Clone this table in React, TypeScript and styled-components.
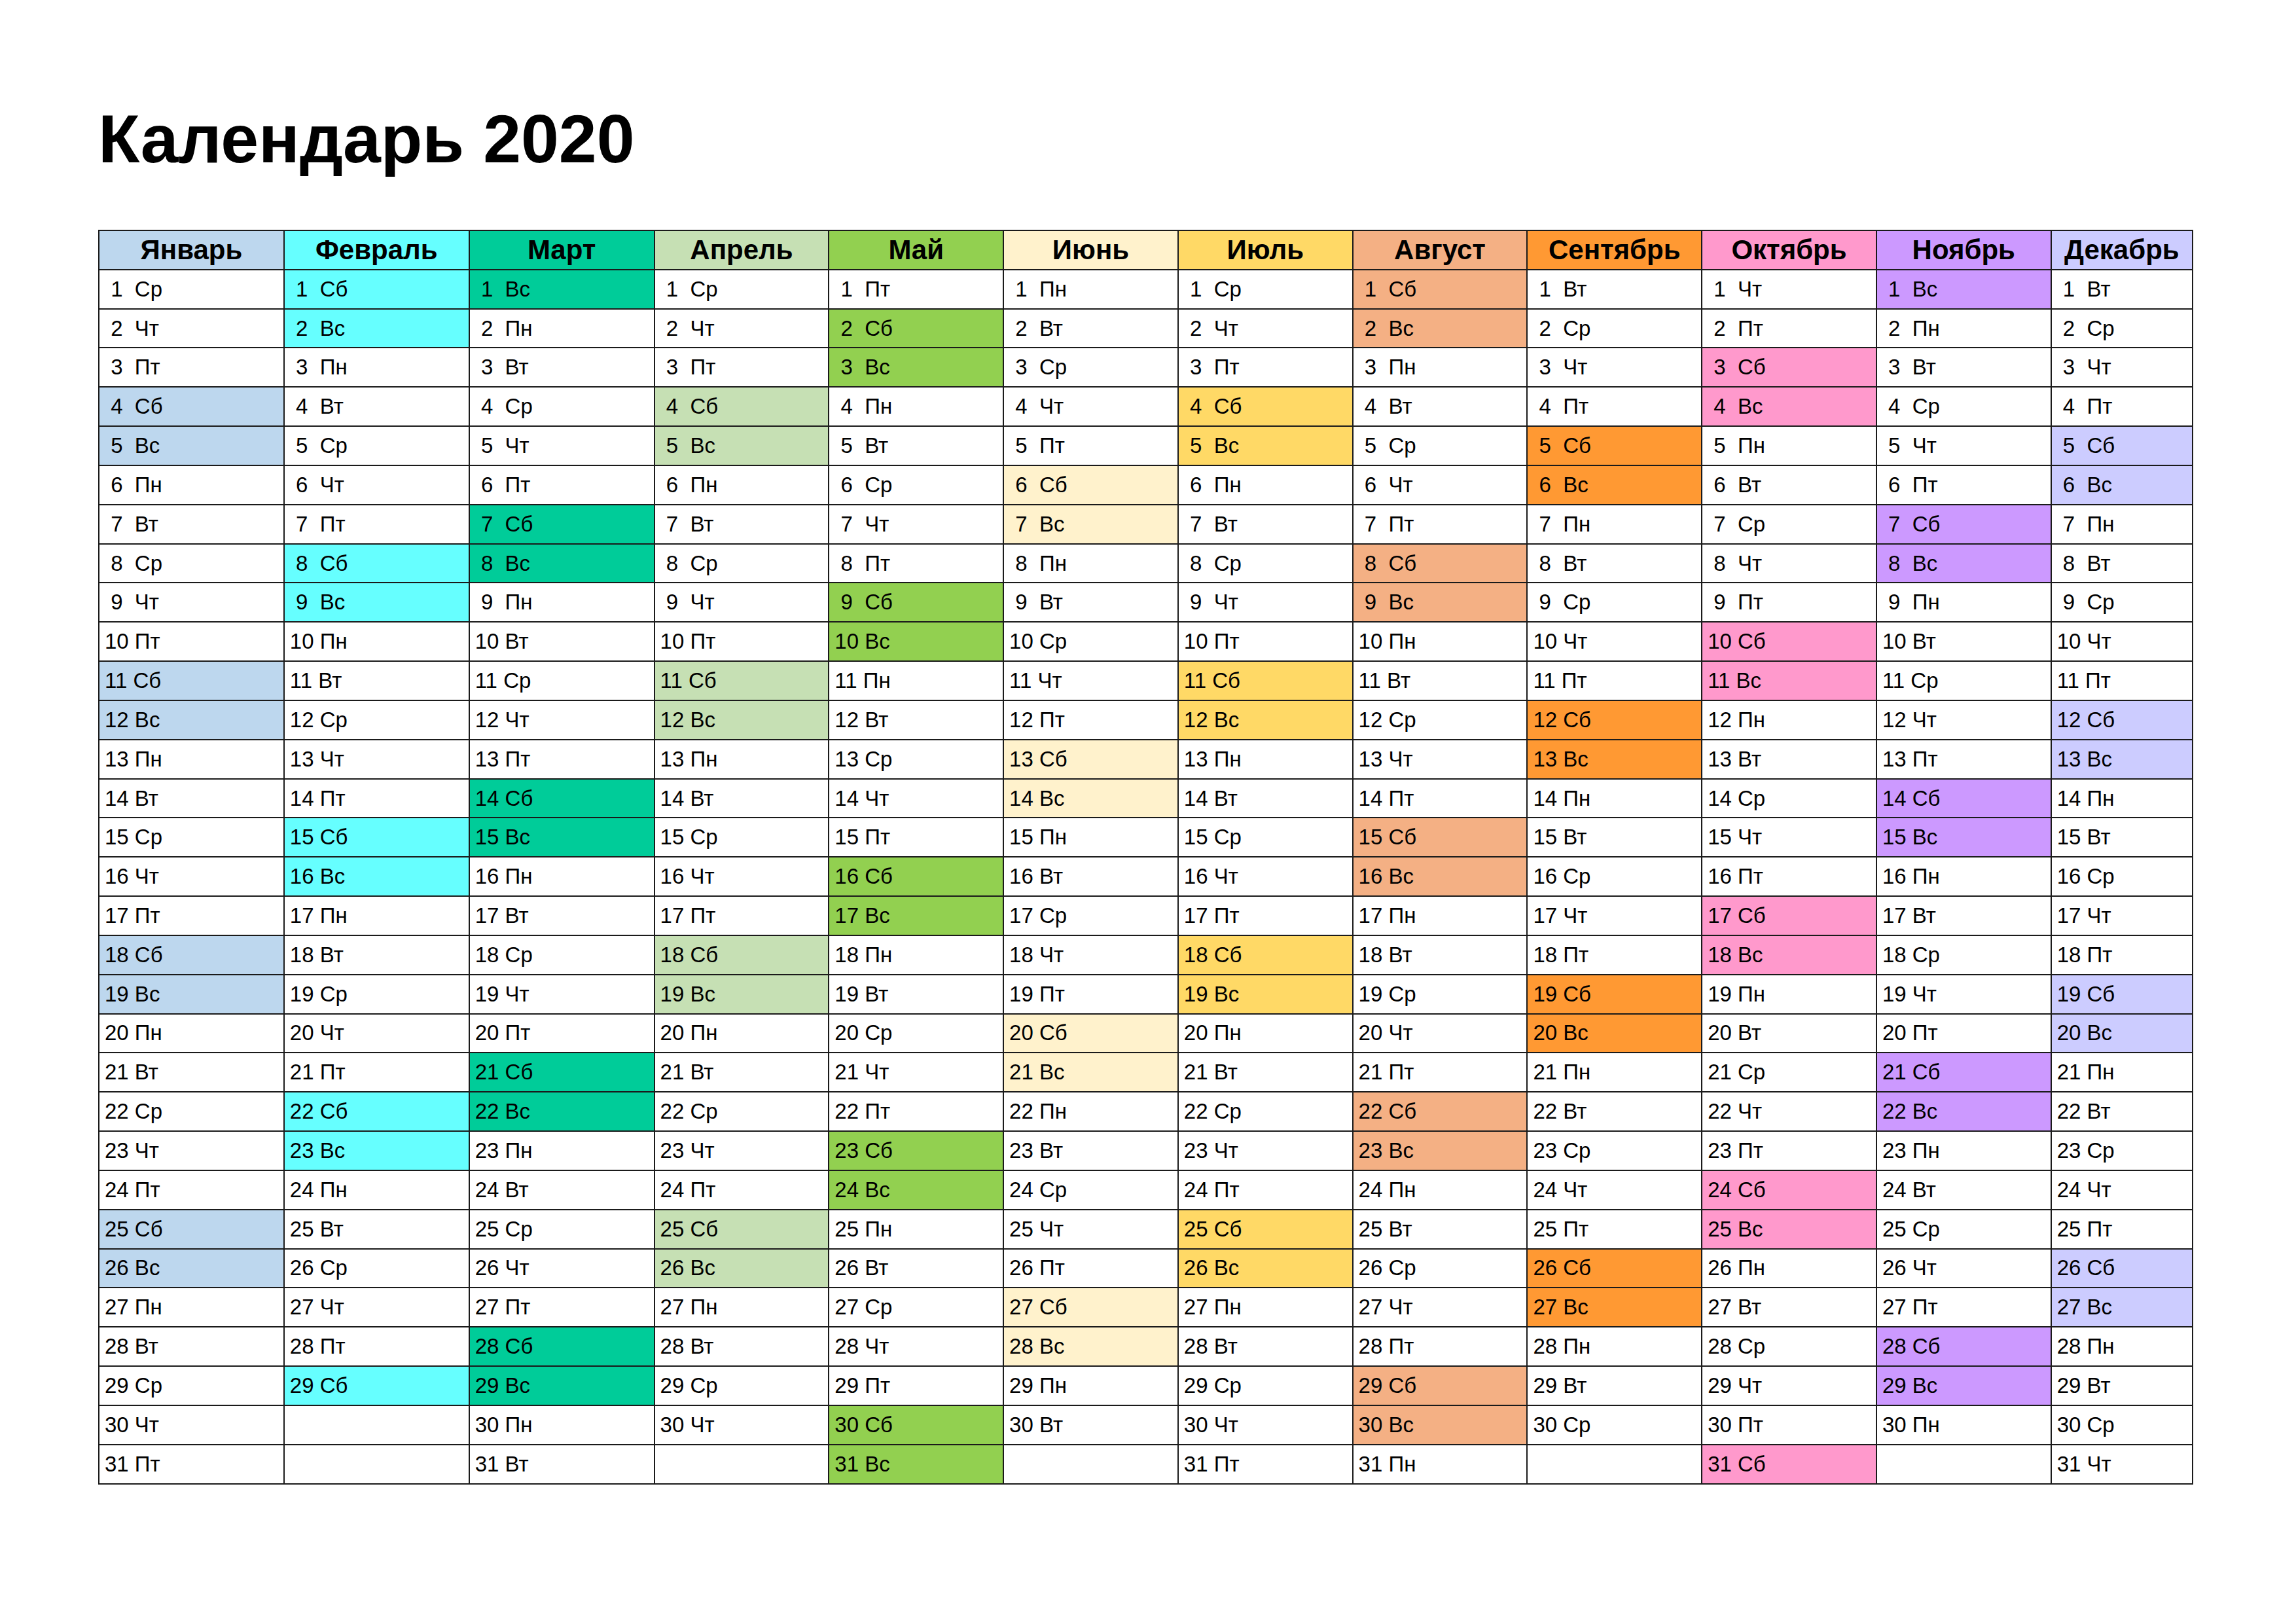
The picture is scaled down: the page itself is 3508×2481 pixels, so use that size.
import React from 'react';
import styled, { createGlobalStyle } from 'styled-components';

const GlobalStyle = createGlobalStyle`
  html, body {
    margin: 0;
    padding: 0;
    background: #ffffff;
  }
  body {
    font-family: "Liberation Sans", Arial, sans-serif;
    color: #000;
  }
`;

const Page = styled.div`
  width: 3508px;
  height: 2481px;
  box-sizing: border-box;
  padding: 160px 0 0 150px;
  display: flex;
  flex-direction: column;
  gap: 87px;
`;

const Title = styled.h1`
  margin: 0;
  font-size: 104px;
  line-height: 104px;
  font-weight: bold;
`;

const Grid = styled.div`
  width: 3201px;
  box-sizing: border-box;
  display: grid;
  grid-template-columns: repeat(3, 280.8fr) repeat(8, 264.7fr) 214.3fr;
  grid-auto-flow: column;
  grid-template-rows: repeat(32, 57.84px);
  gap: 2px;
  border: 2px solid #1a1a1a;
  background: #1a1a1a;
`;

const Head = styled.div<{ $bg: string }>`
  background: ${(p) => p.$bg};
  display: flex;
  align-items: center;
  justify-content: center;
  font-size: 42px;
  font-weight: bold;
`;

const Day = styled.div<{ $bg?: string }>`
  background: ${(p) => p.$bg ?? '#ffffff'};
  display: flex;
  align-items: center;
  padding-left: 8px;
  font-size: 33px;
  white-space: pre;
`;

const months = [
  { name: 'Январь', color: '#bdd7ee' },
  { name: 'Февраль', color: '#66ffff' },
  { name: 'Март', color: '#00cc99' },
  { name: 'Апрель', color: '#c6e0b4' },
  { name: 'Май', color: '#92d050' },
  { name: 'Июнь', color: '#fff2cc' },
  { name: 'Июль', color: '#ffd966' },
  { name: 'Август', color: '#f4b084' },
  { name: 'Сентябрь', color: '#ff9933' },
  { name: 'Октябрь', color: '#ff99cc' },
  { name: 'Ноябрь', color: '#cc99ff' },
  { name: 'Декабрь', color: '#ccccff' },
];

const weekDays = ['Вс', 'Пн', 'Вт', 'Ср', 'Чт', 'Пт', 'Сб'];

function label(d: number, wd: number) {
  const num = d < 10 ? ` ${d}  ` : `${d} `;
  return num + weekDays[wd];
}

export default function App() {
  const year = 2020;
  return (
    <>
      <GlobalStyle />
      <Page>
        <Title>Календарь {year}</Title>
        <Grid>
          {months.map((m, mi) => {
            const count = new Date(year, mi + 1, 0).getDate();
            const cells = [];
            for (let d = 1; d <= 31; d++) {
              if (d > count) {
                cells.push(<Day key={`${mi}-${d}`} />);
                continue;
              }
              const wd = new Date(year, mi, d).getDay();
              const weekend = wd === 0 || wd === 6;
              cells.push(
                <Day key={`${mi}-${d}`} $bg={weekend ? m.color : undefined}>
                  {label(d, wd)}
                </Day>
              );
            }
            return (
              <React.Fragment key={m.name}>
                <Head $bg={m.color}>{m.name}</Head>
                {cells}
              </React.Fragment>
            );
          })}
        </Grid>
      </Page>
    </>
  );
}
